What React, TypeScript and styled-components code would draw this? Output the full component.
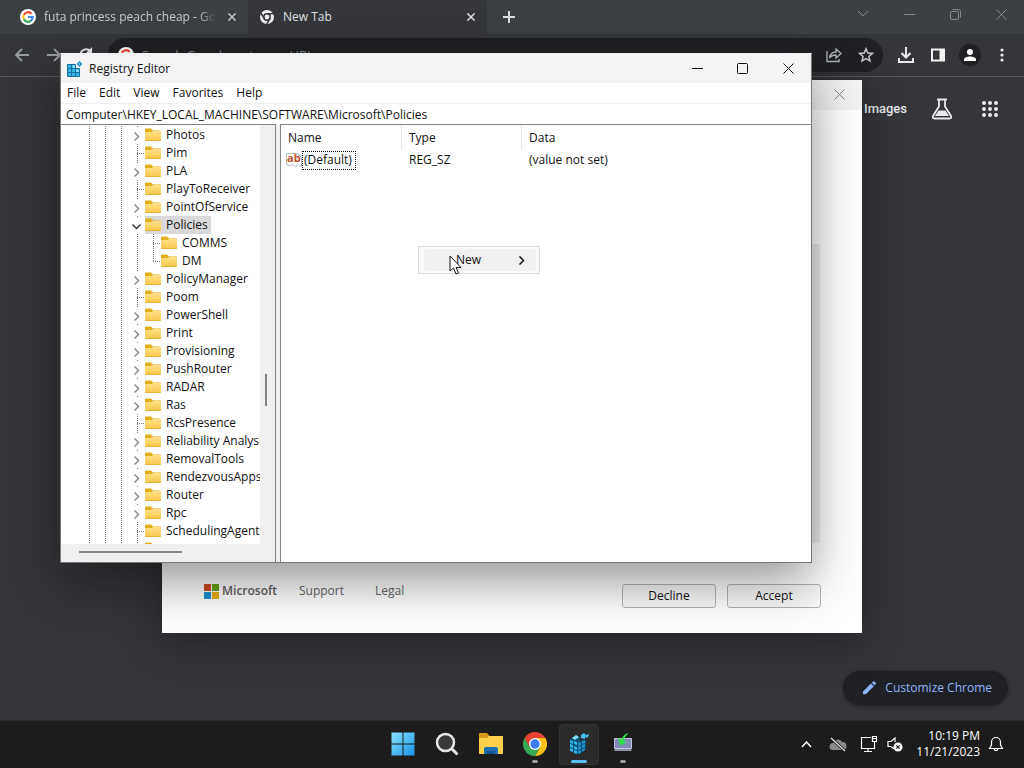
import React from "react";
import styled, { createGlobalStyle } from "styled-components";

const GlobalStyle = createGlobalStyle`
  * { box-sizing: border-box; }
  html, body { margin: 0; padding: 0; background: #35363a; }
  body { font-family: "Open Sans", "Noto Sans", sans-serif; font-size: 12px; line-height: 16px; color: #111; }
  button, input { font: inherit; color: inherit; }
  button { border: 0; background: none; padding: 0; }
  svg { display: block; flex: none; }
  ul { list-style: none; margin: 0; padding: 0; }
`;

const Desktop = styled.div`
  position: relative;
  display: flex;
  flex-direction: column;
  min-height: 100vh;
  overflow: hidden;
`;

/* ---------- Browser ---------- */

const Browser = styled.div`
  flex: 1;
  display: flex;
  flex-direction: column;
  background: #35363a;
`;

const TabStrip = styled.div`
  display: flex;
  align-items: stretch;
  height: 34px;
  background: #3c4043;
  color: #dadce0;
`;

const Tab = styled.div<{ $active?: boolean }>`
  display: flex;
  align-items: center;
  gap: 8px;
  width: ${(p) => (p.$active ? 239 : 248)}px;
  padding: 0 8px 0 ${(p) => (p.$active ? 11 : 20)}px;
  background: ${(p) => (p.$active ? "#35363a" : "#3c4043")};
  color: ${(p) => (p.$active ? "#dfe1e5" : "#c8cbcf")};
`;

const TabTitle = styled.span<{ $fade?: boolean }>`
  flex: 1;
  min-width: 0;
  overflow: hidden;
  white-space: nowrap;
  ${(p) => p.$fade && "mask-image: linear-gradient(90deg, #000 90%, transparent);"}
`;

const IconButton = styled.button<{ $w?: number; $h?: number }>`
  display: flex;
  align-items: center;
  justify-content: center;
  flex: none;
  width: ${(p) => p.$w ?? 16}px;
  height: ${(p) => p.$h ?? 16}px;
`;

const NewTabSlot = styled.div`
  display: flex;
  align-items: center;
  flex: 1;
  padding-left: 10px;
`;

const WindowControls = styled.div<{ $color: string }>`
  display: flex;
  color: ${(p) => p.$color};
`;

const Toolbar = styled.div`
  display: flex;
  align-items: center;
  height: 43px;
  padding: 0 6px;
  color: #e8eaed;
  border-bottom: 1px solid #55565a;
`;

const NavButtons = styled.div`
  display: flex;
  width: 102px;
  color: #9a9da1;
`;

const Omnibox = styled.div`
  flex: 1;
  display: flex;
  align-items: center;
  height: 34px;
  padding: 0 1px 0 10px;
  border-radius: 17px;
  background: #202124;
`;

const OmniInput = styled.input`
  flex: 1;
  min-width: 0;
  margin-left: 8px;
  border: 0;
  padding: 0;
  background: none;
  font-size: 13px;
  &::placeholder { color: #85898e; opacity: 1; }
`;

const ToolbarActions = styled.div`
  display: flex;
  margin-left: 7px;
`;

const Page = styled.main`
  flex: 1;
  display: flex;
  flex-direction: column;
  justify-content: space-between;
  align-items: flex-end;
  padding: 16px 16px 15px;
`;

const PageNav = styled.nav`
  display: flex;
  align-items: center;
  gap: 16px;
  height: 32px;
  padding-right: 2px;
`;

const PageLink = styled.a`
  margin-right: 3px;
  color: #e8eaed;
  font: 500 13px/16px Roboto, sans-serif;
  text-decoration: none;
`;

const CustomizeButton = styled.button`
  display: flex;
  align-items: center;
  gap: 8px;
  height: 34px;
  padding: 0 16px 0 18px;
  border-radius: 17px;
  background: #1f2024;
  color: #8fb4fa;
  font-size: 12px;
  box-shadow: 0 1px 4px rgba(0, 0, 0, 0.4);
`;

/* ---------- Windows ---------- */

const Dialog = styled.section`
  position: absolute;
  left: 162px;
  right: 162px;
  top: 80px;
  bottom: 135px;
  display: flex;
  flex-direction: column;
  background: #fff;
  box-shadow: 0 8px 40px rgba(0, 0, 0, 0.35);
`;

const DialogTitle = styled.header`
  display: flex;
  justify-content: flex-end;
  height: 30px;
  background: #f3f3f3;
  color: #8a8a84;
`;

const DialogBody = styled.div`
  flex: 1;
  display: flex;
  justify-content: flex-end;
  padding: 134px 42px 20px;
`;

const DialogScroll = styled.div`
  width: 9px;
  background: #ececec;
`;

const DialogFooter = styled.footer`
  display: flex;
  align-items: flex-start;
  height: 70px;
  padding: 20px 41px 0 42px;
  color: #5f5f5f;
`;

const Brand = styled.div`
  display: flex;
  align-items: center;
  gap: 3px;
  width: 95px;
  font-size: 12px;
  font-weight: 600;
`;

const FooterLink = styled.a`
  width: 76px;
  color: #666;
  text-decoration: none;
`;

const DialogButtons = styled.div`
  display: flex;
  gap: 11px;
  margin: 1px 0 0 auto;
`;

const DialogButton = styled.button`
  width: 94px;
  height: 24px;
  border: 1px solid #b4b4b4;
  border-radius: 3px;
  background: rgba(245, 245, 245, 0.6);
  color: #111;
`;

const RegWindow = styled.section`
  position: absolute;
  left: 60px;
  right: 212px;
  top: 53px;
  bottom: 205px;
  display: flex;
  flex-direction: column;
  border: 1px solid #777;
  border-top-color: #f3f3f3;
  background: #f0f0f0;
  box-shadow: 0 18px 48px rgba(0, 0, 0, 0.42);
`;

const TitleBar = styled.header`
  display: flex;
  align-items: center;
  height: 29px;
  padding-left: 6px;
  background: #f3f3f3;
`;

const Title = styled.h1`
  flex: 1;
  margin: 0 0 0 6px;
  font-size: 12px;
  font-weight: 400;
`;

const MenuBar = styled.nav`
  display: flex;
  gap: 13px;
  height: 20px;
  padding: 0 6px;
  background: #fff;
`;

const AddressInput = styled.input`
  height: 20px;
  margin-top: 1px;
  padding: 0 5px;
  border: 0;
  background: #fff;
  color: #111;
`;

const Panes = styled.div`
  flex: 1;
  display: flex;
  min-height: 0;
  gap: 4px;
`;

const TreePane = styled.div`
  flex: none;
  display: grid;
  grid-template: 1fr 18px / 1fr 15px;
  width: 215px;
  border-top: 1px solid #828282;
  border-right: 1px solid #828282;
`;

const Tree = styled.ul`
  overflow: hidden;
  min-height: 0;
  padding-top: 1px !important;
  background: #fff;
`;

const VTrack = styled.div`
  display: flex;
  justify-content: flex-start;
  align-items: flex-start;
  padding: 249px 0 0 5px;
`;

const VThumb = styled.div`
  width: 2px;
  height: 32px;
  background: #858585;
`;

const HTrack = styled.div`
  display: flex;
  align-items: flex-start;
  padding: 7px 0 0 18px;
`;

const HThumb = styled.div`
  width: 103px;
  height: 2px;
  background: #858585;
`;

const dots = "repeating-linear-gradient(#777 0 1px, transparent 1px 2px)";
const dotsAcross = "repeating-linear-gradient(90deg, #777 0 1px, transparent 1px 2px)";

const TreeRow = styled.li`
  display: flex;
  align-items: center;
  height: 18px;
  padding-left: 20px;
  white-space: nowrap;
`;

const Guide = styled.span`
  flex: none;
  width: 16px;
  height: 18px;
  background: ${dots} 8px 0 / 1px 100% no-repeat;
`;

const Branch = styled.span<{ $last?: boolean; $leaf?: boolean }>`
  flex: none;
  display: flex;
  align-items: flex-end;
  justify-content: center;
  width: 16px;
  height: 18px;
  background: ${dots} 8px 0 / 1px ${(p) => (p.$last ? "10px" : "100%")} no-repeat
    ${(p) => p.$leaf && `, ${dotsAcross} 8px 9px / 8px 1px no-repeat`};
`;

const Expander = styled.button<{ $open?: boolean }>`
  display: flex;
  align-items: center;
  justify-content: center;
  width: 14px;
  height: 15px;
  margin: 0 2px 1px 0;
  padding-top: 1px;
  background: #fff;
  color: ${(p) => (p.$open ? "#333" : "#8c8c8c")};
`;

const NodeLabel = styled.span<{ $selected?: boolean }>`
  display: flex;
  align-items: center;
  gap: 5px;
  height: 18px;
  padding-right: 3px;
  background: ${(p) => (p.$selected ? "#d9d9d9" : "transparent")};
`;

const ListPane = styled.div`
  position: relative;
  flex: 1;
  border-top: 1px solid #828282;
  border-left: 1px solid #828282;
  background: #fff;
`;

const ValueTable = styled.table`
  width: 100%;
  table-layout: fixed;
  border-spacing: 0;
  th, td { padding: 0 0 0 7px; font-weight: 400; text-align: left; }
  th { height: 25px; border-right: 1px solid #e5e5e5; }
  th:last-child { border-right: 0; }
  td { height: 20px; }
  td:first-child { padding-left: 5px; }
`;

const ValueName = styled.span`
  display: flex;
  align-items: center;
`;

const FocusBox = styled.span`
  height: 19px;
  padding: 0 3px 0 1px;
  border: 1px dotted #111;
`;

const ContextMenu = styled.div`
  position: absolute;
  left: 137px;
  top: 121px;
  width: 122px;
  padding: 2px 3px 2px 5px;
  border: 1px solid #dedede;
  background: #f9f9f9;
`;

const ContextItem = styled.button`
  display: flex;
  align-items: center;
  justify-content: space-between;
  width: 100%;
  height: 22px;
  padding: 0 10px 0 32px;
  border-radius: 3px;
  background: #f0f0f0;
`;

const Pointer = styled.svg`
  position: absolute;
  left: 30px;
  top: 8px;
`;

/* ---------- Taskbar ---------- */

const Taskbar = styled.footer`
  display: grid;
  grid-template-columns: 1fr auto 1fr;
  align-items: start;
  height: 48px;
  border-top: 1px solid #2b2b2c;
  background: #1c1c1c;
  color: #fff;
`;

const Apps = styled.div`
  grid-column: 2;
  display: flex;
  gap: 4px;
  padding: 3px 0 0 2px;
`;

const AppButton = styled.button<{ $active?: boolean }>`
  display: flex;
  flex-direction: column;
  align-items: center;
  width: 40px;
  height: 41px;
  padding-top: 7px;
  border: 1px solid ${(p) => (p.$active ? "#343434" : "transparent")};
  border-radius: 4px;
  background: ${(p) => (p.$active ? "#2b2b2b" : "none")};
`;

const Indicator = styled.span<{ $active?: boolean }>`
  width: ${(p) => (p.$active ? 16 : 6)}px;
  height: 3px;
  margin-top: 4px;
  border-radius: 2px;
  background: ${(p) => (p.$active ? "#5bc0f0" : "#9a9a9a")};
`;

const Tray = styled.div`
  display: flex;
  align-items: center;
  justify-content: flex-end;
  height: 46px;
  padding-right: 20px;
`;

const Clock = styled.time`
  width: 74px;
  margin-right: 8px;
  text-align: right;
  white-space: nowrap;
  line-height: 16px;
`;

/* ---------- Icons ---------- */

const CloseIcon = ({ size = 11, w = 1 }: { size?: number; w?: number }) => (
  <svg width={size} height={size} viewBox="0 0 11 11" fill="none" stroke="currentColor" strokeWidth={w}>
    <path d="M.5.5l10 10M10.500.5l-10 10" />
  </svg>
);

const MinimizeIcon = () => (
  <svg width="11" height="11" fill="none" stroke="currentColor"><path d="M0 5.500h11" /></svg>
);

const GoogleIcon = () => (
  <svg width="16" height="16" viewBox="0 0 16 16">
    <circle cx="8" cy="8" r="8" fill="#fff" />
    <g fill="none" strokeWidth="2.200">
      <path d="M11.500 4.700A4.700 4.700 0 0 0 3.900 5.800" stroke="#ea4335" />
      <path d="M3.900 5.700a4.700 4.700 0 0 0 0 4.600" stroke="#fbbc05" />
      <path d="M3.800 10.200a4.700 4.700 0 0 0 7.400 1.300" stroke="#34a853" />
      <path d="M11 11.600A4.700 4.700 0 0 0 12.700 8H8" stroke="#4285f4" />
    </g>
  </svg>
);

const ChromeMono = () => (
  <svg width="16" height="16" viewBox="0 0 16 16">
    <circle cx="8" cy="8" r="7" fill="#eceef0" />
    <g fill="none" stroke="#35363a" strokeWidth="1.500">
      <circle cx="8" cy="8" r="3.200" />
      <path d="M8 4.800h6.500M5.200 9.600L2 4.200M10.800 9.600L7.700 15" />
    </g>
  </svg>
);

const ChromeColor = () => (
  <svg width="24" height="24" viewBox="0 0 24 24">
    <path d="M22.400 6A12 12 0 0 1 12 24l5.200-9L12 6z" fill="#fbc116" />
    <path d="M1.600 6A12 12 0 0 0 12 24l5.200-9H6.800z" fill="#34a853" />
    <path d="M1.600 6A12 12 0 0 1 22.400 6H12l-5.200 9z" fill="#ea4335" />
    <circle cx="12" cy="12" r="6" fill="#fff" />
    <circle cx="12" cy="12" r="4.700" fill="#3b7ded" />
  </svg>
);

const ArrowIcon = ({ right }: { right?: boolean }) => (
  <svg width="16" height="16" viewBox="0 0 16 16" fill="none" stroke="currentColor" strokeWidth="1.800">
    <path d={right ? "M1 8h13M8 2l6 6-6 6" : "M15 8H2M8 2L2 8l6 6"} />
  </svg>
);

const ReloadIcon = () => (
  <svg width="16" height="16" viewBox="0 0 16 16" fill="none" stroke="#e8eaed" strokeWidth="2">
    <path d="M13.500 11A6 6 0 1 1 12.500 4" /><path d="M14 0v6H8z" fill="#e8eaed" stroke="none" />
  </svg>
);

const FolderIcon = () => (
  <svg width="16" height="14" viewBox="0 0 16 14">
    <defs>
      <linearGradient id="folder" x1="0" y1="0" x2="0" y2="1">
        <stop offset="0" stopColor="#ffe08a" /><stop offset="1" stopColor="#f9c74a" />
      </linearGradient>
    </defs>
    <path d="M0 1.500Q0 .5 1 .5h5l2 2h7q1 0 1 1V7H0z" fill="#e5ae1c" />
    <path d="M0 4h6.500l1.500-1h7q1 0 1 1v8q0 1-1 1H1q-1 0-1-1z" fill="url(#folder)" />
    <path d="M.5 12.500h15" stroke="#e6b03a" />
  </svg>
);

const ChevronIcon = ({ down }: { down?: boolean }) => (
  <svg width="9" height="9" viewBox="0 0 9 9" fill="none" stroke="currentColor" strokeWidth="1.500">
    <path d={down ? "M.5 2.500l4 4 4-4" : "M2.500.5l4 4-4 4"} />
  </svg>
);

const RegistryIcon = () => (
  <svg width="16" height="16" viewBox="0 0 16 16">
    <path d="M.5 3.500h8v4h4v8H.5z" fill="#35b3e6" stroke="#12709f" />
    <path d="M.5 7.500h8M.5 11.500h12M4.500 3.500v12M8.500 7.500v8" stroke="#12709f" />
    <path d="M5.500 4h2.500v3H5.500zM9 8.500h3v2.500H9z" fill="#7fdcff" />
    <path d="M12.500 0l3 3-3 3-3-3z" fill="#2791c9" /><path d="M12.500 2l1 1-1 1-1-1z" fill="#a7e8ff" />
  </svg>
);

const StringValueIcon = () => (
  <svg width="16" height="16" viewBox="0 0 16 16">
    <path d="M.5 1.500h11l4 4v9l-3-2-3 2-3-2-3 1-3-1z" fill="#fff" stroke="#b4b8be" />
    <text x="1" y="10" fontSize="11" fontWeight="700" fill="#c4502e" fontFamily="Open Sans, sans-serif">ab</text>
  </svg>
);

const ShareIcon = () => (
  <svg width="16" height="16" viewBox="0 0 16 16" fill="none" stroke="#b5b8bb" strokeWidth="1.300">
    <path d="M1 4v10.500h12V12" /><path d="M3.500 11c.5-4 3-6 6.500-6V2l5 4.500-5 4.500V8c-3 0-5 .8-6.500 3z" />
  </svg>
);

const StarIcon = () => (
  <svg width="16" height="16" viewBox="0 0 16 16" fill="none" stroke="#c8cacd" strokeWidth="1.500">
    <path d="M8 1.800l1.800 4.200 4.600.4-3.500 3 1.100 4.500L8 11.500l-4 2.400 1.100-4.500-3.500-3 4.600-.4z" />
  </svg>
);

const DownloadIcon = () => (
  <svg width="18" height="18" viewBox="0 0 18 18" fill="none" stroke="currentColor" strokeWidth="2">
    <path d="M9 1v10M4.500 7L9 11.500 13.500 7M2 12v4h14v-4" />
  </svg>
);

const SidePanelIcon = () => (
  <svg width="16" height="16" viewBox="0 0 16 16">
    <path d="M2 2.500h12v11H2z" fill="none" stroke="#f1f1f1" strokeWidth="2" /><path d="M9.500 2h5v12h-5z" fill="#f1f1f1" />
  </svg>
);

const AvatarIcon = () => (
  <svg width="22" height="22" viewBox="0 0 22 22">
    <circle cx="11" cy="11" r="11" fill="#202124" />
    <circle cx="11" cy="8" r="3" fill="#fff" /><path d="M5 17v-1.500c0-2 3-3 6-3s6 1 6 3V17z" fill="#fff" />
  </svg>
);

const MoreIcon = () => (
  <svg width="4" height="14" fill="currentColor">
    <circle cx="2" cy="2" r="1.600" /><circle cx="2" cy="7" r="1.600" /><circle cx="2" cy="12" r="1.600" />
  </svg>
);

const FlaskIcon = () => (
  <svg width="22" height="22" viewBox="0 0 22 22" fill="none" stroke="#e8eaed" strokeWidth="1.800">
    <path d="M6 1.500h10M8 1.500v7L2 18q-1 2.500 1.500 2.500h15Q21 20.500 20 18l-6-9.500v-7" />
    <path d="M7.500 12.500h7l3.500 5.500H4z" fill="#e8eaed" stroke="none" />
  </svg>
);

const AppsGridIcon = () => (
  <svg width="18" height="18" fill="#e8eaed">
    {[3, 9, 15].map((y) => [3, 9, 15].map((x) => <circle key={`${x}-${y}`} cx={x} cy={y} r="2" />))}
  </svg>
);

const PencilIcon = () => (
  <svg width="16" height="16" viewBox="0 0 16 16" fill="#8fb4fa">
    <path d="M2 11.500L10 3.500l2.800 2.800-8 8H2zM10.800 2.700l1.300-1.300q.6-.5 1.200 0l1.500 1.500q.5.600 0 1.200l-1.200 1.300z" />
  </svg>
);

const MicrosoftLogo = () => (
  <svg width="15" height="15">
    <path d="M0 0h7v7H0z" fill="#d2492a" /><path d="M8 0h7v7H8z" fill="#6ba510" />
    <path d="M0 8h7v7H0z" fill="#1b8fd0" /><path d="M8 8h7v7H8z" fill="#eab010" />
  </svg>
);

const WindowsIcon = () => (
  <svg width="24" height="24" viewBox="0 0 24 24">
    <defs>
      <linearGradient id="win" x1="0" y1="0" x2="1" y2="1">
        <stop offset="0" stopColor="#8be2fb" /><stop offset="1" stopColor="#1593e6" />
      </linearGradient>
    </defs>
    <path d="M.5.5h11v11H.5zM12.500.5h11v11h-11zM.5 12.500h11v11H.5zM12.500 12.500h11v11h-11z" fill="url(#win)" />
  </svg>
);

const SearchIcon = () => (
  <svg width="24" height="24" viewBox="0 0 24 24" fill="none">
    <circle cx="10.500" cy="10.500" r="8.500" fill="#3a3a3a" stroke="#e6e6e6" strokeWidth="2.500" />
    <path d="M17 17l5.500 5.500" stroke="#e6e6e6" strokeWidth="3" />
  </svg>
);

const ExplorerIcon = () => (
  <svg width="24" height="24" viewBox="0 0 24 24">
    <path d="M0 2q0-1 1-1h7l2.500 3H22q2 0 2 1v5H0z" fill="#d69a17" />
    <path d="M0 6h8l2-2h13q1 0 1 1v16q0 1-1 1H1q-1 0-1-1z" fill="#fcd04b" />
    <path d="M5 22v-5q0-2 2-2h10q2 0 2 2v5z" fill="#1c6fb3" /><path d="M8 19h8v3H8z" fill="#14548c" />
  </svg>
);

const RegistryTaskIcon = () => (
  <svg width="24" height="24" viewBox="0 0 24 24">
    <path d="M3 7l6-4 4 2v4l6-1v9l-7 5-9-3z" fill="#0c4f73" />
    <path d="M3 8l3 1v3l-3-1zM7 9l3 1v3l-3-1zM3 12l3 1v3l-3-1zM7 14l3 1v3l-3-1zM3 16l3 1v3l-3-1zM7 18l3 1v3l-3-1z" fill="#2fb2e8" />
    <path d="M11 11l3-1v3l-3 1zM15 9l3-1v3l-3 1zM11 15l3-1v3l-3 1zM15 13l3-1v3l-3 1zM11 19l3-1v3l-3 1zM15 17l3-1v2l-3 2z" fill="#1a93cc" />
    <path d="M5 6l4-3 3 2-4 3z" fill="#7fdcfa" />
    <path d="M14 3l3-2 2 2-1 4-4-1zM19 3l3-1-1 3-2 1z" fill="#48bfee" />
  </svg>
);

const InstallerIcon = () => (
  <svg width="24" height="24" viewBox="0 0 24 24">
    <path d="M3.500 6.500h17v10h-17z" fill="#8289b5" stroke="#c3c7dc" /><path d="M4 17h16l1 2H3z" fill="#8d91a8" />
    <path d="M18 1q-6 1-7 6L7 6l2 8 7-4-3-1q0-4 5-8z" fill="#2fdc52" />
  </svg>
);

const CloudOffIcon = () => (
  <svg width="18" height="16" viewBox="0 0 18 16">
    <path d="M4 14a3.500 3.500 0 0 1 0-7 5 5 0 0 1 9-1 4 4 0 0 1 1 8z" fill="#8a8a8a" />
    <path d="M2 2l14 13" stroke="#1c1c1c" strokeWidth="3" /><path d="M2 2l14 13" stroke="#e5e5e5" strokeWidth="1.200" />
  </svg>
);

const NetworkIcon = () => (
  <svg width="18" height="18" viewBox="0 0 18 18" fill="none" stroke="#fff" strokeWidth="1.200">
    <path d="M11 2.500H1.500v11h13V9M4 16.500h8M8 13.500v3M12.500 1.500h4v5h-4zM14.500 6.500V10M12.500 3.500h4" />
  </svg>
);

const VolumeIcon = () => (
  <svg width="16" height="16" viewBox="0 0 16 16" fill="none" stroke="#fff" strokeWidth="1.200">
    <path d="M7 13L4 10.500H1v-5h3L8 2v4" /><circle cx="11" cy="11" r="4.500" fill="#fff" stroke="none" />
    <path d="M9.300 9.300l3.400 3.400M12.700 9.300l-3.400 3.400" stroke="#1c1c1c" />
  </svg>
);

const BellIcon = () => (
  <svg width="16" height="16" viewBox="0 0 16 16" fill="none" stroke="#fff" strokeWidth="1.200">
    <path d="M1.500 12.500L3.500 9V6a4.500 4.500 0 0 1 9 0v3l2 3.500zM6 13q2 3.500 4 0" />
  </svg>
);

/* ---------- Content ---------- */

type Node = { name: string; kind?: "leaf" | "open"; nested?: boolean; last?: boolean };

const keys: Node[] = [
  { name: "Photos" },
  { name: "Pim", kind: "leaf" },
  { name: "PLA" },
  { name: "PlayToReceiver", kind: "leaf" },
  { name: "PointOfService" },
  { name: "Policies", kind: "open" },
  { name: "COMMS", kind: "leaf", nested: true },
  { name: "DM", kind: "leaf", nested: true, last: true },
  { name: "PolicyManager" },
  { name: "Poom", kind: "leaf" },
  { name: "PowerShell" },
  { name: "Print" },
  { name: "Provisioning" },
  { name: "PushRouter" },
  { name: "RADAR" },
  { name: "Ras" },
  { name: "RcsPresence", kind: "leaf" },
  { name: "Reliability Analysis" },
  { name: "RemovalTools" },
  { name: "RendezvousApps" },
  { name: "Router" },
  { name: "Rpc" },
  { name: "SchedulingAgent", kind: "leaf" },
  { name: "", kind: "leaf" },
];

const KeyRow = ({ node }: { node: Node }) => (
  <TreeRow>
    <Guide /><Guide /><Guide />
    {node.nested && <Guide />}
    <Branch $leaf={node.kind === "leaf"} $last={node.last}>
      {node.kind !== "leaf" && (
        <Expander $open={node.kind === "open"} aria-label={`Toggle ${node.name}`}>
          <ChevronIcon down={node.kind === "open"} />
        </Expander>
      )}
    </Branch>
    <NodeLabel $selected={node.kind === "open"}><FolderIcon />{node.name}</NodeLabel>
  </TreeRow>
);

export default function App() {
  return (
    <>
      <GlobalStyle />
      <Desktop>
        <Browser>
          <TabStrip>
            <Tab>
              <GoogleIcon />
              <TabTitle $fade>futa princess peach cheap - Google Search</TabTitle>
              <IconButton aria-label="Close tab"><CloseIcon size={8} w={2} /></IconButton>
            </Tab>
            <Tab $active>
              <ChromeMono />
              <TabTitle>New Tab</TabTitle>
              <IconButton aria-label="Close tab"><CloseIcon size={8} w={2} /></IconButton>
            </Tab>
            <NewTabSlot>
              <IconButton $w={24} $h={24} aria-label="New tab">
                <svg width="12" height="12" stroke="currentColor" strokeWidth="2"><path d="M6 0v12M0 6h12" /></svg>
              </IconButton>
            </NewTabSlot>
            <WindowControls $color="#85888b">
              <IconButton $w={46} $h={28} aria-label="Search tabs">
                <svg width="12" height="8" fill="none" stroke="currentColor"><path d="M1 1l5 5 5-5" /></svg>
              </IconButton>
              <IconButton $w={46} $h={28} aria-label="Minimize"><MinimizeIcon /></IconButton>
              <IconButton $w={46} $h={28} aria-label="Restore">
                <svg width="11" height="11" fill="none" stroke="currentColor">
                  <rect x=".5" y="2.500" width="8" height="8" rx="1.500" /><path d="M2.500.5h6q2 0 2 2v6" />
                </svg>
              </IconButton>
              <IconButton $w={46} $h={28} aria-label="Close"><CloseIcon /></IconButton>
            </WindowControls>
          </TabStrip>
          <Toolbar>
            <NavButtons>
              <IconButton $w={32} aria-label="Back"><ArrowIcon /></IconButton>
              <IconButton $w={32} aria-label="Forward"><ArrowIcon right /></IconButton>
              <IconButton $w={32} aria-label="Reload"><ReloadIcon /></IconButton>
            </NavButtons>
            <Omnibox>
              <GoogleIcon />
              <OmniInput aria-label="Address" placeholder="Search Google or type a URL" />
              <IconButton $w={32} aria-label="Share"><ShareIcon /></IconButton>
              <IconButton $w={32} aria-label="Bookmark"><StarIcon /></IconButton>
            </Omnibox>
            <ToolbarActions>
              <IconButton $w={32} aria-label="Downloads"><DownloadIcon /></IconButton>
              <IconButton $w={32} aria-label="Side panel"><SidePanelIcon /></IconButton>
              <IconButton $w={32} aria-label="Profile"><AvatarIcon /></IconButton>
              <IconButton $w={32} aria-label="Menu"><MoreIcon /></IconButton>
            </ToolbarActions>
          </Toolbar>
          <Page>
            <PageNav>
              <PageLink href="#images">Images</PageLink>
              <IconButton $w={32} $h={32} aria-label="Search Labs"><FlaskIcon /></IconButton>
              <IconButton $w={32} $h={32} aria-label="Google apps"><AppsGridIcon /></IconButton>
            </PageNav>
            <CustomizeButton><PencilIcon />Customize Chrome</CustomizeButton>
          </Page>
        </Browser>

        <Dialog aria-label="License terms">
          <DialogTitle>
            <IconButton $w={46} $h={28} aria-label="Close"><CloseIcon /></IconButton>
          </DialogTitle>
          <DialogBody><DialogScroll /></DialogBody>
          <DialogFooter>
            <Brand><MicrosoftLogo />Microsoft</Brand>
            <FooterLink href="#support">Support</FooterLink>
            <FooterLink href="#legal">Legal</FooterLink>
            <DialogButtons>
              <DialogButton>Decline</DialogButton>
              <DialogButton>Accept</DialogButton>
            </DialogButtons>
          </DialogFooter>
        </Dialog>

        <RegWindow aria-label="Registry Editor">
          <TitleBar>
            <RegistryIcon />
            <Title>Registry Editor</Title>
            <WindowControls $color="#111">
              <IconButton $w={45} $h={28} aria-label="Minimize"><MinimizeIcon /></IconButton>
              <IconButton $w={45} $h={28} aria-label="Maximize">
                <svg width="11" height="11" fill="none" stroke="currentColor"><rect x=".5" y=".5" width="10" height="10" rx="1" /></svg>
              </IconButton>
              <IconButton $w={46} $h={28} aria-label="Close"><CloseIcon /></IconButton>
            </WindowControls>
          </TitleBar>
          <MenuBar>
            {["File", "Edit", "View", "Favorites", "Help"].map((m) => <button key={m}>{m}</button>)}
          </MenuBar>
          <AddressInput aria-label="Key path" defaultValue={"Computer\\HKEY_LOCAL_MACHINE\\SOFTWARE\\Microsoft\\Policies"} />
          <Panes>
            <TreePane>
              <Tree>{keys.map((k, i) => <KeyRow key={i} node={k} />)}</Tree>
              <VTrack><VThumb /></VTrack>
              <HTrack><HThumb /></HTrack>
            </TreePane>
            <ListPane>
              <ValueTable>
                <colgroup><col width="121" /><col width="120" /><col /></colgroup>
                <thead><tr><th>Name</th><th>Type</th><th>Data</th></tr></thead>
                <tbody>
                  <tr>
                    <td><ValueName><StringValueIcon /><FocusBox>(Default)</FocusBox></ValueName></td>
                    <td>REG_SZ</td>
                    <td>(value not set)</td>
                  </tr>
                </tbody>
              </ValueTable>
              <ContextMenu>
                <ContextItem>New<ChevronIcon /></ContextItem>
                <Pointer width="13" height="20" viewBox="0 0 13 20">
                  <path d="M1 1v15l3.500-3 2.500 6 2.500-1-2.500-5.500h5z" fill="#fff" stroke="#111" />
                </Pointer>
              </ContextMenu>
            </ListPane>
          </Panes>
        </RegWindow>

        <Taskbar>
          <Apps>
            <AppButton aria-label="Start"><WindowsIcon /></AppButton>
            <AppButton aria-label="Search"><SearchIcon /></AppButton>
            <AppButton aria-label="File Explorer"><ExplorerIcon /></AppButton>
            <AppButton aria-label="Chrome"><ChromeColor /><Indicator /></AppButton>
            <AppButton $active aria-label="Registry Editor"><RegistryTaskIcon /><Indicator $active /></AppButton>
            <AppButton aria-label="Installer"><InstallerIcon /><Indicator /></AppButton>
          </Apps>
          <Tray>
            <IconButton $w={32} aria-label="Hidden icons">
              <svg width="11" height="7" fill="none" stroke="#fff" strokeWidth="1.500"><path d="M1 6l4.500-5L10 6" /></svg>
            </IconButton>
            <IconButton $w={32} aria-label="OneDrive"><CloudOffIcon /></IconButton>
            <IconButton $w={30} aria-label="Network"><NetworkIcon /></IconButton>
            <IconButton $w={22} aria-label="Volume"><VolumeIcon /></IconButton>
            <Clock>10:19 PM<br />11/21/2023</Clock>
            <BellIcon />
          </Tray>
        </Taskbar>
      </Desktop>
    </>
  );
}
